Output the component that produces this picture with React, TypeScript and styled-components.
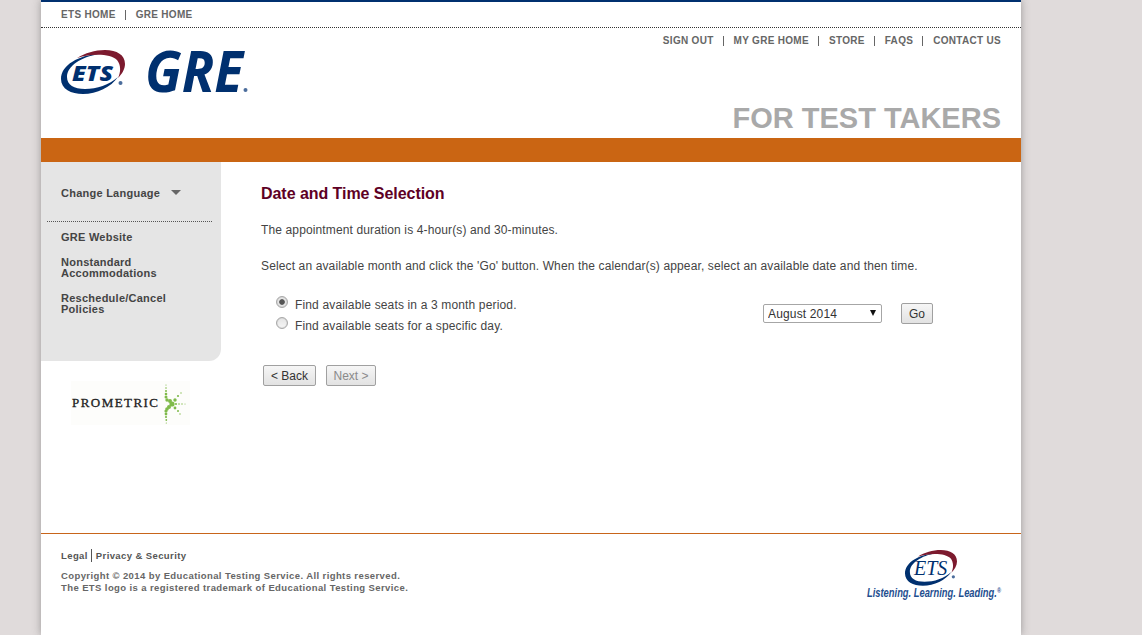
import React from 'react';
import styled, { createGlobalStyle } from 'styled-components';

const GlobalStyle = createGlobalStyle`
  html, body {
    margin: 0;
    padding: 0;
    background: #e0dbdb;
    font-family: "Liberation Sans", Arial, sans-serif;
  }
`;

const Page = styled.div`
  box-sizing: border-box;
  width: 980px;
  height: 635px;
  margin-left: 41px;
  background: #fff;
  border-top: 2px solid #00306f;
  box-shadow: 0 0 8px rgba(70, 70, 70, 0.45);
  display: flex;
  flex-direction: column;
  overflow: hidden;
`;

// header
const TopBar = styled.div`
  height: 25px;
  padding-left: 20px;
  display: flex;
  align-items: center;
  border-bottom: 1px dotted #333;
`;

const NavLink = styled.a`
  font-size: 10px;
  font-weight: 700;
  letter-spacing: 0.3px;
  color: #666;
`;

const NavSep = styled.span`
  width: 1px;
  height: 10px;
  background: #666;
  margin: 0 10px 0 9px;
`;

const Header = styled.div`
  height: 110px;
  padding: 0 20px;
  display: flex;
  justify-content: space-between;
`;

const LogoRow = styled.div`
  display: flex;
  align-items: flex-start;
  gap: 22px;
  padding-top: 22px;
`;

const HeaderRight = styled.div`
  display: flex;
  flex-direction: column;
  align-items: flex-end;
  justify-content: space-between;
  padding: 7px 0 3px;
`;

const UserNav = styled.div`
  display: flex;
  align-items: center;
`;

const Tagline = styled.div`
  font-size: 29px;
  line-height: 34px;
  font-weight: 700;
  color: #a9a9a9;
`;

const OrangeBand = styled.div`
  height: 24px;
  background: #ca6513;
`;

// main area
const Body = styled.div`
  flex: 1;
  display: flex;
`;

const Side = styled.div`
  width: 180px;
  flex: none;
`;

const SideMenu = styled.div`
  box-sizing: border-box;
  height: 199px;
  background: #e5e5e5;
  border-radius: 0 0 12px 0;
  padding: 0 9px 0 6px;
`;

const LanguageRow = styled.div`
  box-sizing: border-box;
  height: 60px;
  padding: 2px 0 0 14px;
  display: flex;
  align-items: center;
  gap: 11px;
  border-bottom: 1px dotted #555;
  font-size: 11px;
  font-weight: 700;
  letter-spacing: 0.25px;
  color: #444;
`;

const Caret = styled.span`
  width: 0;
  height: 0;
  border-left: 5px solid transparent;
  border-right: 5px solid transparent;
  border-top: 5px solid #666;
`;

const SideLinks = styled.div`
  display: flex;
  flex-direction: column;
  gap: 14px;
  padding: 10px 0 0 14px;
`;

const SideLink = styled.a`
  font-size: 11px;
  line-height: 11px;
  font-weight: 700;
  letter-spacing: 0.25px;
  color: #444;
`;

const PrometricBox = styled.div`
  margin: 20px 0 0 30px;
  width: 119px;
  height: 44px;
  padding-left: 1px;
  box-sizing: border-box;
  display: flex;
  align-items: center;
  background: #fdfdfb;
`;

const PrometricWord = styled.span`
  flex: none;
  width: 88px;
  white-space: nowrap;
  font-family: "Liberation Serif", serif;
  font-size: 13px;
  letter-spacing: 1.45px;
  -webkit-text-stroke: 0.3px #222;
  color: #222;
`;

const Content = styled.div`
  flex: 1;
  padding: 22px 0 0 40px;
`;

const Title = styled.h1`
  margin: 0;
  font-size: 16px;
  line-height: 19px;
  font-weight: 700;
  letter-spacing: -0.05px;
  color: #5e0024;
`;

const Para = styled.p`
  margin: 19px 0 0;
  font-size: 12px;
  line-height: 17px;
  letter-spacing: 0.13px;
  color: #444;
`;

const SearchRow = styled.div`
  display: flex;
  justify-content: space-between;
  margin-top: 21px;
  padding: 0 88px 0 15px;
`;

const RadioList = styled.div`
  display: flex;
  flex-direction: column;
  gap: 3px;
`;

const RadioLine = styled.label`
  display: flex;
  align-items: center;
  gap: 7px;
  height: 18px;
  font-size: 12px;
  letter-spacing: 0.15px;
  color: #444;
`;

const Radio = styled.input`
  appearance: none;
  box-sizing: border-box;
  width: 12px;
  height: 12px;
  margin: -6px 0 0;
  border-radius: 50%;
  border: 1px solid #a8a8a8;
  background: linear-gradient(#e4e4e4, #f6f6f6);
  box-shadow: inset 0 0 1px #999;
  &:checked {
    background: radial-gradient(circle, #555 0, #555 2.4px, #e6e6e6 3.2px);
  }
`;

const MonthPicker = styled.div`
  display: flex;
  align-items: center;
  gap: 19px;
  align-self: flex-start;
  margin-top: 7px;
`;

const SelectWrap = styled.div`
  position: relative;
  &::after {
    content: '';
    position: absolute;
    top: 6px;
    right: 6px;
    border-left: 3.5px solid transparent;
    border-right: 3.5px solid transparent;
    border-top: 6px solid #111;
  }
`;

const MonthSelect = styled.select`
  appearance: none;
  box-sizing: border-box;
  display: block;
  width: 119px;
  height: 19px;
  padding: 0 0 0 4px;
  border: 1px solid #a6a6a6;
  border-radius: 2px;
  background: #fff;
  font-family: "Liberation Sans", Arial, sans-serif;
  font-size: 12px;
  letter-spacing: 0.15px;
  color: #333;
`;

const Button = styled.button<{ $width: number }>`
  box-sizing: border-box;
  height: 21px;
  padding: 0;
  width: ${props => props.$width}px;
  border: 1px solid #a0a0a0;
  border-radius: 2px;
  background: linear-gradient(#f6f6f6, #e2e2e2);
  font-family: "Liberation Sans", Arial, sans-serif;
  font-size: 12px;
  color: ${props => (props.disabled ? '#8a8a8a' : '#333')};
`;

const ButtonRow = styled.div`
  display: flex;
  gap: 10px;
  margin: 30px 0 0 2px;
`;

// footer
const Footer = styled.div`
  box-sizing: border-box;
  height: 102px;
  border-top: 1px solid #c8651a;
  padding: 14px 20px 0;
  display: flex;
  justify-content: space-between;
`;

const LegalLinks = styled.div`
  display: flex;
  align-items: center;
  height: 14px;
  font-size: 9.5px;
  font-weight: 700;
  letter-spacing: 0.4px;
  color: #555;
`;

const LegalSep = styled.span`
  width: 1px;
  height: 13px;
  background: #555;
  margin: 0 4px 0 3px;
`;

const Copyright = styled.div`
  margin-top: 8px;
  font-size: 9.5px;
  line-height: 12px;
  font-weight: 700;
  letter-spacing: 0.4px;
  color: #666;
`;

const FooterBrand = styled.div`
  display: flex;
  flex-direction: column;
  width: 134px;
  margin-top: 2px;
`;

const FooterLogo = styled.div`
  margin-left: 38px;
`;

const EtsLogo = ({ width, serif }: { width: number; serif?: boolean }) => (
  <svg width={width} viewBox="0 0 64 44" style={{ display: 'block', overflow: 'visible' }}>
    <path
      d="M38 4C18 5 0 15 0 29C0 39 10 44 22 44C36 44 50 37 57 27C48 35 36 39 24 39C13 39 6 35 6 27C6 16 20 7 38 4Z"
      fill="#00306f"
    />
    <path
      d="M16 8C24 3 34 0 44 0C56 0 64 5 64 14C64 19 61 24 57 28C60 22 60 15 56 10C50 4 32 3 16 8Z"
      fill="#7c1a2e"
    />
    <text
      x="11"
      y="31"
      textLength="41"
      lengthAdjust="spacingAndGlyphs"
      fontFamily={serif ? '"Liberation Serif", serif' : '"Open Sans", sans-serif'}
      fontSize={serif ? 25 : 21}
      fontWeight={serif ? 400 : 800}
      fontStyle="italic"
      fill="#00306f"
    >
      ETS
    </text>
    <circle cx="59.5" cy="33" r="2" fill="#4b6d9c" />
  </svg>
);

const GreLogo = () => (
  <svg width="101" height="46" viewBox="0 0 101 46" style={{ display: 'block', overflow: 'visible' }}>
    <text
      x="-2"
      y="42"
      textLength="98"
      lengthAdjust="spacingAndGlyphs"
      fontFamily='"Open Sans", sans-serif'
      fontSize="57"
      fontWeight="700"
      fontStyle="italic"
      fill="#00306f"
    >
      GRE
    </text>
    <circle cx="98.5" cy="40" r="2" fill="#4b6d9c" />
  </svg>
);

const BrandLine = () => (
  <svg width="134" height="13" viewBox="0 0 134 13" style={{ display: 'block', overflow: 'visible' }}>
    <text
      transform="translate(0 11) scale(0.78 1)"
      fontFamily='"Liberation Sans", sans-serif'
      fontSize="12"
      fontWeight="700"
      fontStyle="italic"
      fill="#1f4f8f"
    >
      Listening. Learning. Leading.
      <tspan fontSize="7" dy="-4">®</tspan>
    </text>
  </svg>
);

const STAR_DOTS = [
  [6, 4, 0.6], [6, 7, 0.8], [6, 10, 1], [6, 13, 1.3], [6, 16, 1.5],
  [6, 30, 1.6], [6, 33, 1.4], [6, 36, 1.1], [6.3, 39, 0.9], [6.3, 42, 0.6],
  [15, 19, 1.7], [18, 15, 1.1], [21, 12, 0.7],
  [7, 19, 1.7], [10, 20, 2],
  [16, 23, 1.1], [19, 23, 0.8], [22, 23, 0.7], [25, 23, 0.5],
  [15, 27, 1.4], [18, 30, 1], [20, 33, 0.7],
  [9, 26, 2], [7, 28, 1.8], [12, 23, 2.6],
];

const PrometricStar = () => (
  <svg width="30" height="44" viewBox="0 0 30 44">
    {STAR_DOTS.map(([cx, cy, r]) => (
      <circle key={`${cx}-${cy}`} cx={cx} cy={cy} r={r} fill="#7fba4a" />
    ))}
  </svg>
);

const App = () => (
  <>
    <GlobalStyle />
    <Page>
      <TopBar>
        <NavLink>ETS HOME</NavLink>
        <NavSep />
        <NavLink>GRE HOME</NavLink>
      </TopBar>
      <Header>
        <LogoRow>
          <EtsLogo width={64} />
          <GreLogo />
        </LogoRow>
        <HeaderRight>
          <UserNav>
            <NavLink>SIGN OUT</NavLink>
            <NavSep />
            <NavLink>MY GRE HOME</NavLink>
            <NavSep />
            <NavLink>STORE</NavLink>
            <NavSep />
            <NavLink>FAQS</NavLink>
            <NavSep />
            <NavLink>CONTACT US</NavLink>
          </UserNav>
          <Tagline>FOR TEST TAKERS</Tagline>
        </HeaderRight>
      </Header>
      <OrangeBand />
      <Body>
        <Side>
          <SideMenu>
            <LanguageRow>
              Change Language
              <Caret />
            </LanguageRow>
            <SideLinks>
              <SideLink>GRE Website</SideLink>
              <SideLink>Nonstandard<br />Accommodations</SideLink>
              <SideLink>Reschedule/Cancel<br />Policies</SideLink>
            </SideLinks>
          </SideMenu>
          <PrometricBox>
            <PrometricWord>PROMETRIC</PrometricWord>
            <PrometricStar />
          </PrometricBox>
        </Side>
        <Content>
          <Title>Date and Time Selection</Title>
          <Para>The appointment duration is 4-hour(s) and 30-minutes.</Para>
          <Para>Select an available month and click the 'Go' button. When the calendar(s) appear, select an available date and then time.</Para>
          <SearchRow>
            <RadioList>
              <RadioLine>
                <Radio type="radio" name="period" defaultChecked />
                Find available seats in a 3 month period.
              </RadioLine>
              <RadioLine>
                <Radio type="radio" name="period" />
                Find available seats for a specific day.
              </RadioLine>
            </RadioList>
            <MonthPicker>
              <SelectWrap>
                <MonthSelect defaultValue="August 2014">
                  <option>August 2014</option>
                </MonthSelect>
              </SelectWrap>
              <Button $width={32}>Go</Button>
            </MonthPicker>
          </SearchRow>
          <ButtonRow>
            <Button $width={53}>&lt; Back</Button>
            <Button $width={50} disabled>Next &gt;</Button>
          </ButtonRow>
        </Content>
      </Body>
      <Footer>
        <div>
          <LegalLinks>
            Legal
            <LegalSep />
            Privacy &amp; Security
          </LegalLinks>
          <Copyright>
            Copyright © 2014 by Educational Testing Service. All rights reserved.<br />
            The ETS logo is a registered trademark of Educational Testing Service.
          </Copyright>
        </div>
        <FooterBrand>
          <FooterLogo>
            <EtsLogo width={52} serif />
          </FooterLogo>
          <BrandLine />
        </FooterBrand>
      </Footer>
    </Page>
  </>
);

export default App;
